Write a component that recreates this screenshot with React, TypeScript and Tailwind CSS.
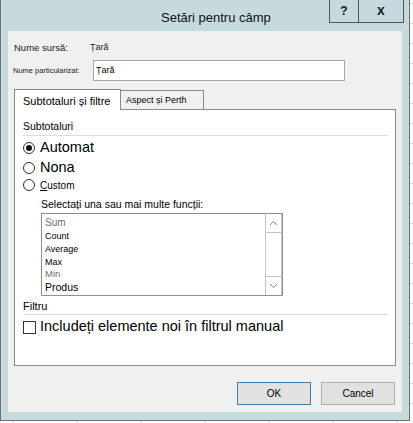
import React from "react";

const FONT = "font-['Liberation_Sans',Arial,sans-serif]";

function Radio({ checked = false }: { checked?: boolean }) {
  return (
    <span className="flex h-[12px] w-[12px] shrink-0 items-center justify-center rounded-full border border-[#333333] bg-white">
      {checked && <span className="h-[6px] w-[6px] rounded-full bg-[#111111]" />}
    </span>
  );
}

function Chevron({ up }: { up?: boolean }) {
  return (
    <svg width="9" height="6" viewBox="0 0 9 6" aria-hidden>
      <polyline
        points={up ? "1,5 4.5,1.5 8,5" : "1,1 4.5,4.5 8,1"}
        fill="none"
        stroke="#8a8a8a"
        strokeWidth="1"
      />
    </svg>
  );
}

const ITEMS = [
  { label: "Sum", h: "h-[16px]", cls: "text-[10px] text-[#6f6f6f]" },
  { label: "Count", h: "h-[13px]", cls: "text-[9px] text-black" },
  { label: "Average", h: "h-[13px]", cls: "text-[9px] text-black" },
  { label: "Max", h: "h-[13px]", cls: "text-[9px] text-black" },
  { label: "Min", h: "h-[11px]", cls: "text-[9.5px] text-[#6f6f6f]" },
  { label: "Produs", h: "h-[15px]", cls: "text-[10.5px] text-black" },
];

export default function App() {
  return (
    <div
      className={`h-[423px] w-[413px] overflow-hidden bg-white bg-[repeating-linear-gradient(0deg,transparent_0_19px,#d6d6d6_19px_20px),repeating-linear-gradient(90deg,transparent_0_13px,#d6d6d6_13px_14px,transparent_14px_64px)] ${FONT}`}
    >
      <div className="flex h-[421px] w-[410px] flex-col border-x border-b border-[#6e6e6e] bg-[#c6dade]">
        {/* title bar */}
        <div className="flex h-[31px] shrink-0">
          <span className="ml-[160px] self-center pt-[4px] text-[13px] text-[#111111]">Setări pentru câmp</span>
          <div className="ml-auto mr-[5px] flex h-[23px] border-x border-b border-[#555555]">
            <span className="flex w-[29px] items-center justify-center border-r border-[#555555] text-[12px] font-bold text-[#1a1a1a]">
              ?
            </span>
            <span className="flex w-[44px] items-center justify-center pb-[1px] text-[14px] font-bold text-[#1a1a1a]">
              x
            </span>
          </div>
        </div>

        {/* client area */}
        <div className="ml-[7px] flex h-[381px] w-[394px] flex-col bg-[#f0f0f0]">
          <div className="mt-[11px] flex h-[12px] items-center pl-[6px] text-[9.5px] text-[#1a1a1a]">
            <span className="w-[76px]">Nume sursă:</span>
            <span className="text-[9px]">Țară</span>
          </div>

          <div className="mt-[6px] flex h-[21px] items-center pl-[5px]">
            <span className="w-[80px] text-[7.5px] text-[#1a1a1a]">Nume particularizat:</span>
            <div className="flex h-[21px] w-[252px] items-center border border-[#a5a5a5] bg-white pl-[2px] text-[9px] text-black">
              Țară
            </div>
          </div>

          <div className="px-[6px]">
            {/* tabs */}
            <div className="mt-[8px] flex h-[20px] items-end">
              <div className="relative z-10 -mb-px flex h-[21px] w-[107px] items-center border-x border-t border-[#8a8a8a] bg-white pl-[8px] pt-[2px] text-[11px] text-black">
                Subtotaluri și filtre
              </div>
              <div className="flex h-[19px] w-[83px] items-center border-r border-t border-[#8a8a8a] bg-[#f0f0f0] pl-[5px] pt-[1px] text-[9px] text-black">
                Aspect și Perth
              </div>
            </div>

            {/* panel */}
            <div className="flex h-[257px] flex-col border border-[#8a8a8a] bg-white pl-[8px]">
              <div className="mt-[9px] flex h-[17px] w-[365px] items-center border-b border-[#d5dee3] text-[10.5px] text-black">
                Subtotaluri
              </div>

              <div className="mt-[2px] flex h-[20px] items-center gap-[5px]">
                <Radio checked />
                <span className="text-[14.5px] text-black">Automat</span>
              </div>
              <div className="flex h-[20px] items-center gap-[5px]">
                <Radio />
                <span className="text-[14.5px] text-black">Nona</span>
              </div>
              <div className="flex h-[14px] items-center gap-[5px]">
                <Radio />
                <span className="text-[10px] text-black">
                  <span className="underline">C</span>ustom
                </span>
              </div>

              <div className="mt-[6px] flex h-[14px] items-center pl-[18px] text-[10.5px] text-black">
                Selectați una sau mai multe funcții:
              </div>

              <div className="ml-[18px] mt-[1px] flex h-[83px] w-[242px] border border-[#8f8f8f] bg-white">
                <div className="flex flex-1 flex-col pl-[3px]">
                  {ITEMS.map((item) => (
                    <div key={item.label} className={`flex items-center ${item.h} ${item.cls}`}>
                      {item.label}
                    </div>
                  ))}
                </div>
                <div className="flex w-[17px] flex-col border-x border-[#c4c4c4]">
                  <div className="flex h-[19px] items-center justify-center border-b border-[#c4c4c4]">
                    <Chevron up />
                  </div>
                  <div className="flex-1" />
                  <div className="flex h-[19px] items-center justify-center border-t border-[#c4c4c4]">
                    <Chevron />
                  </div>
                </div>
              </div>

              <div className="mt-[2px] flex h-[17px] w-[365px] items-center border-b border-[#d5dee3] text-[11px] text-black">
                Filtru
              </div>

              <div className="mt-[3px] flex h-[18px] items-center gap-[4px]">
                <span className="h-[13px] w-[13px] shrink-0 border border-[#333333] bg-white" />
                <span className="text-[14.5px] text-black">Includeți elemente noi în filtrul manual</span>
              </div>
            </div>
          </div>

          {/* buttons */}
          <div className="mt-[16px] flex justify-end gap-[10px] pr-[7px]">
            <button
              type="button"
              className="flex h-[23px] w-[74px] items-center justify-center border border-[#3c7fb1] bg-[#e1e1e1] text-[10px] text-black"
            >
              OK
            </button>
            <button
              type="button"
              className="flex h-[23px] w-[74px] items-center justify-center border border-[#adadad] bg-[#e1e1e1] text-[10px] text-black"
            >
              Cancel
            </button>
          </div>
        </div>
      </div>
    </div>
  );
}
